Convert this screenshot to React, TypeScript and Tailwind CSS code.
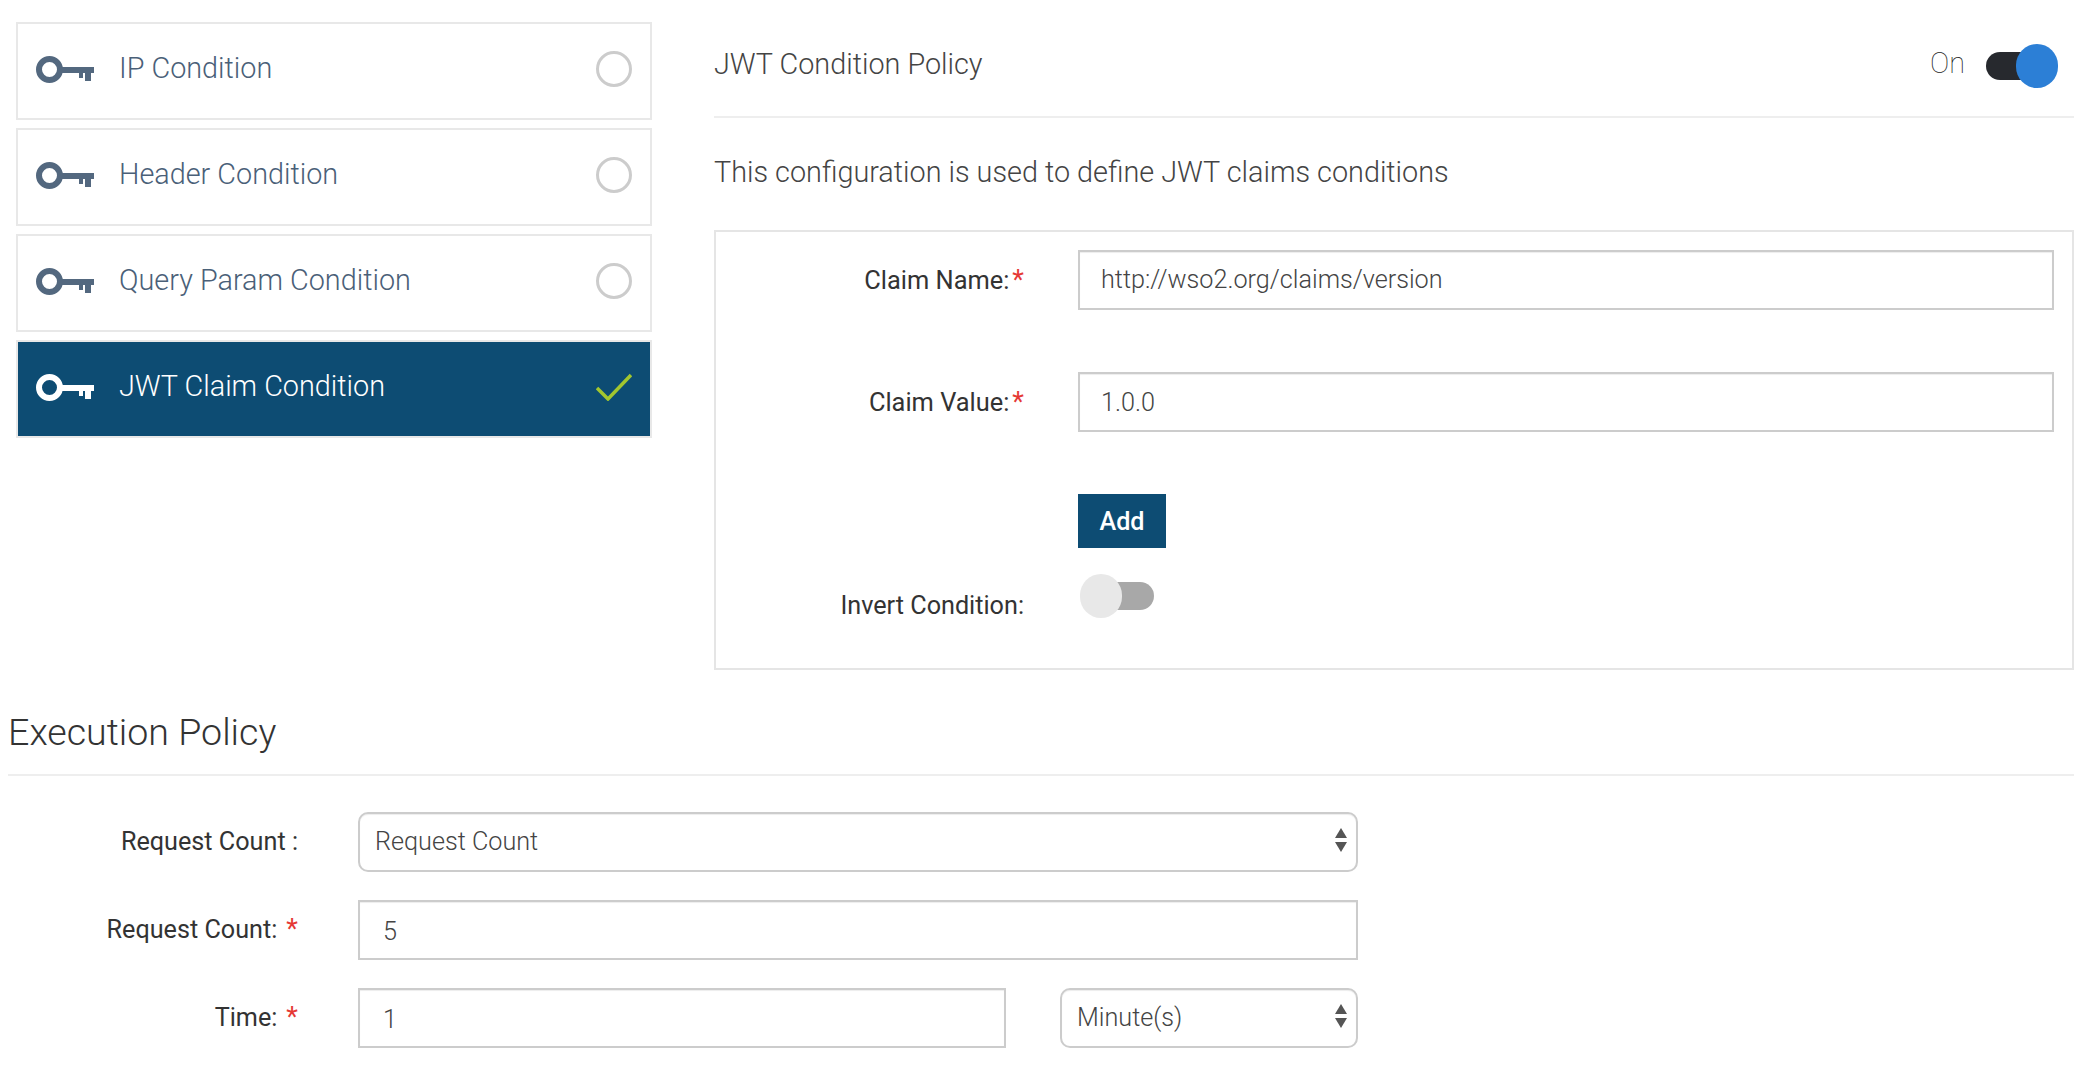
const conditions = [
	{ name: "IP Condition", active: false },
	{ name: "Header Condition", active: false },
	{ name: "Query Param Condition", active: false },
	{ name: "JWT Claim Condition", active: true },
];

function KeyIcon({ className }: { className: string }) {
	return (
		<svg viewBox="0 0 58 27" className={`h-[27px] w-[58px] shrink-0 ${className}`} fill="currentColor">
			<path
				fillRule="evenodd"
				d="M13.5 0a13.5 13.5 0 1 1 0 27a13.5 13.5 0 0 1 0-27zM13.5 6a7.5 7.5 0 1 0 0 15a7.5 7.5 0 0 0 0-15z"
			/>
			<path d="M25 11h33v6h-3v8h-6v-8h-2v5h-4v-5H25z" />
		</svg>
	);
}

function SelectArrows() {
	return (
		<svg viewBox="0 0 12 24" className="pointer-events-none absolute right-[11px] top-[16px] h-[24px] w-[12px] text-[#555]" fill="currentColor">
			<path d="M6 0l6 10H0z" />
			<path d="M0 14h12L6 24z" />
		</svg>
	);
}

function Toggle({ on }: { on: boolean }) {
	return (
		<div className="relative h-[44px] w-[72px]">
			<div className={`absolute top-[8px] h-[28px] w-[68px] rounded-full ${on ? "left-0 bg-[#27292e]" : "left-[6px] bg-[#a8a8a8]"}`} />
			<div className={`absolute top-0 h-[44px] w-[42px] rounded-full ${on ? "left-[30px] bg-[#2c7fd6]" : "left-0 bg-[#e8e8e8]"}`} />
		</div>
	);
}

function Required({ className }: { className: string }) {
	return <span className={`text-[27px] leading-none text-[#e53935] ${className}`}>*</span>;
}

function TextInput({ value, className }: { value: string; className: string }) {
	return (
		<input
			readOnly
			value={value}
			className={`h-[60px] border-2 border-[#ccc] text-[25.2px] font-light text-[#444] shadow-[inset_0_1px_1px_rgba(0,0,0,0.075)] outline-none ${className}`}
		/>
	);
}

function SelectBox({ value, className }: { value: string; className: string }) {
	return (
		<div className={`relative h-[60px] ${className}`}>
			<select
				defaultValue={value}
				className="h-full w-full appearance-none rounded-[10px] border-2 border-[#ccc] bg-white pl-[15px] text-[25.2px] font-light text-[#444] shadow-[inset_0_1px_1px_rgba(0,0,0,0.075)] outline-none"
			>
				<option>{value}</option>
			</select>
			<SelectArrows />
		</div>
	);
}

export default function App() {
	return (
		<div className="h-[1072px] w-[2084px] overflow-hidden bg-white pr-[10px] pt-[22px] font-['Roboto',sans-serif]">
			<div className="flex gap-[62px] pl-[16px]">
				<div className="flex w-[636px] flex-col gap-[8px]">
					{conditions.map((c) => (
						<div
							key={c.name}
							className={`flex h-[98px] items-center border-2 border-[#e8e8e8] pb-[3px] pl-[18px] pr-[18px] ${c.active ? "bg-[#0d4c73] text-white" : "bg-white text-[#4a6078]"}`}
						>
							<KeyIcon className={c.active ? "text-white" : "text-[#53687f]"} />
							<span className="mb-[1px] ml-[25px] flex-1 text-[28.8px] font-light">{c.name}</span>
							{c.active ? (
								<svg viewBox="0 0 36 28" className="mb-[2px] h-[28px] w-[36px] text-[#a2c62f]" fill="none" stroke="currentColor" strokeWidth="3.5">
									<path d="M1 15l11 11L35 2" />
								</svg>
							) : (
								<div className="mb-[2px] h-[36px] w-[36px] rounded-full border-[3px] border-[#ccc]" />
							)}
						</div>
					))}
				</div>

				<div className="flex-1">
					<div className="flex h-[96px] items-center justify-between border-b-2 border-[#eee] pb-[8px]">
						<span className="text-[28.8px] font-light text-[#444]">JWT Condition Policy</span>
						<div className="flex items-center pr-[16px] pt-[2px]">
							<span className="mb-[5px] mr-[21px] text-[28.8px] font-thin text-[#222]">On</span>
							<Toggle on />
						</div>
					</div>
					<p className="flex h-[112px] items-center pb-[3px] text-[28.8px] font-light text-[#444]">
						This configuration is used to define JWT claims conditions
					</p>
					<div className="h-[440px] border-2 border-[#e5e5e5] pr-[18px] pt-[18px]">
						<div className="flex items-center">
							<label className="w-[308px] text-right text-[25.4px] text-[#333]">
								Claim Name:
								<Required className="ml-[3px]" />
							</label>
							<TextInput value="http://wso2.org/claims/version" className="ml-[54px] flex-1 pb-[1px] pl-[21px]" />
						</div>
						<div className="mt-[62px] flex items-center">
							<label className="w-[308px] text-right text-[25.4px] text-[#333]">
								Claim Value:
								<Required className="ml-[3px]" />
							</label>
							<TextInput value="1.0.0" className="ml-[54px] flex-1 pl-[21px]" />
						</div>
						<button className="ml-[362px] mt-[62px] block h-[54px] w-[88px] bg-[#0d4c73] pt-[1px] text-[25.2px] font-medium text-white">
							Add
						</button>
						<div className="mt-[26px] flex">
							<label className="w-[308px] pt-[13px] text-right text-[25.2px] text-[#333]">Invert Condition:</label>
							<div className="ml-[56px]">
								<Toggle on={false} />
							</div>
						</div>
					</div>
				</div>
			</div>

			<div className="ml-[8px] mt-[21px] flex h-[85px] items-center border-b-2 border-[#eee] text-[37.6px] font-light text-[#333]">
				Execution Policy
			</div>

			<div className="mt-[36px] flex flex-col gap-[28px] pl-[358px]">
				<div className="relative flex items-center">
					<label className="absolute right-[calc(100%+60px)] whitespace-nowrap text-[25.2px] text-[#333]">Request Count :</label>
					<SelectBox value="Request Count" className="w-[1000px]" />
				</div>
				<div className="relative flex items-center">
					<label className="absolute right-[calc(100%+60px)] whitespace-nowrap text-[25.2px] text-[#333]">
						Request Count:
						<Required className="ml-[9px]" />
					</label>
					<TextInput value="5" className="w-[1000px] pl-[23px] pt-[2px]" />
				</div>
				<div className="relative flex items-center">
					<label className="absolute right-[calc(100%+60px)] whitespace-nowrap text-[25.2px] text-[#333]">
						Time:
						<Required className="ml-[9px]" />
					</label>
					<TextInput value="1" className="w-[648px] pl-[23px] pt-[2px]" />
					<SelectBox value="Minute(s)" className="ml-[54px] w-[298px]" />
				</div>
			</div>
		</div>
	);
}
